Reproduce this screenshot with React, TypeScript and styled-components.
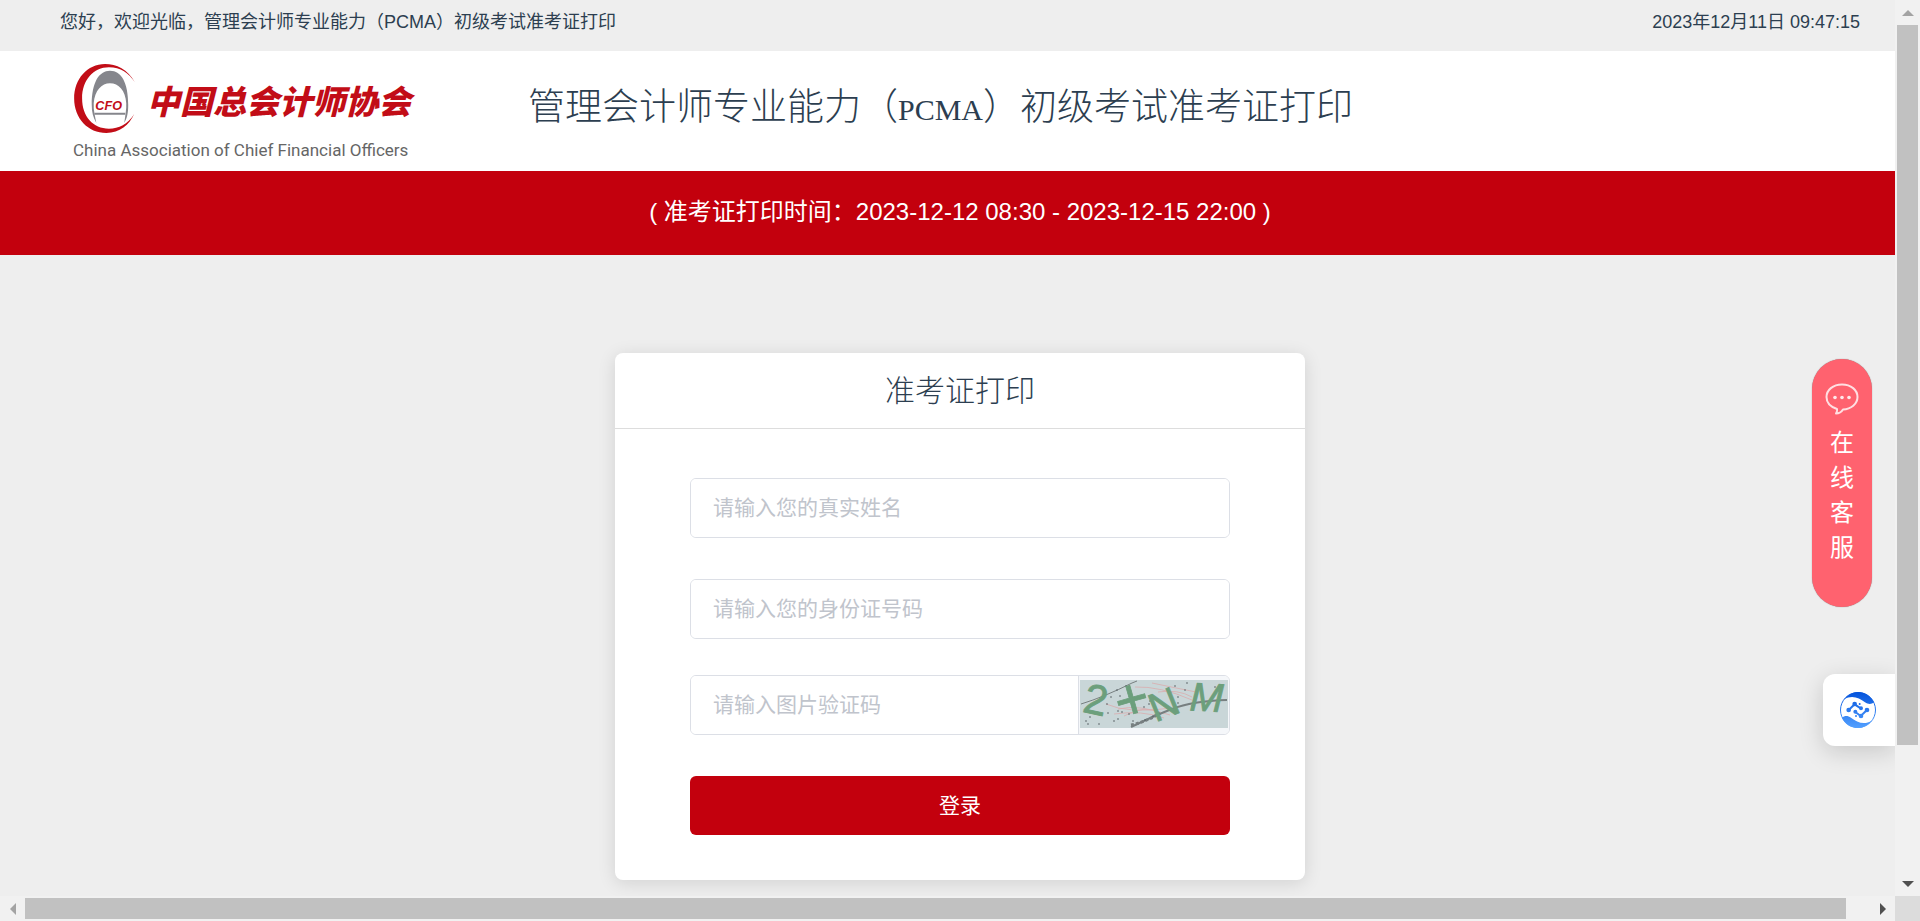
import React from "react";
import styled, { createGlobalStyle } from "styled-components";

const red = "#c3000d";
const ink = "#2c3e50";
const line = "#dcdfe6";
const BAR = "25px";

const GlobalStyle = createGlobalStyle`
  *, *::before, *::after { box-sizing: border-box; }
  body {
    margin: 0;
    background: #eee;
    color: ${ink};
    font-family: "Liberation Sans", "Noto Sans CJK SC", sans-serif;
    font-size: 18px;
  }
  h1, h2, p { margin: 0; font-weight: 300; }
  button, input { font: inherit; }
`;

const Shell = styled.div`
  display: grid;
  grid-template: minmax(0, 1fr) ${BAR} / minmax(0, 1fr) ${BAR};
  height: 100vh;
  overflow: hidden;
`;

const Viewport = styled.div`
  position: relative;
  overflow: hidden;
`;

const Page = styled.div`
  width: 100vw;
`;

const TopBar = styled.div`
  display: flex;
  justify-content: space-between;
  padding: 9px 60px 15px;
  line-height: 27px;
`;

const Header = styled.header`
  display: flex;
  align-items: flex-start;
  gap: 117px;
  height: 120px;
  padding: 13px 73px 0;
  background: #fff;
`;

const Brand = styled.a`
  display: grid;
  grid-template-columns: 62px 1fr;
  column-gap: 12px;
  align-items: center;
  color: #666;
  text-decoration: none;
  white-space: nowrap;
`;

const BrandName = styled.span`
  padding-top: 3px;
  color: #c20d17;
  font: italic 900 33px/66px "Noto Sans CJK SC", sans-serif;
`;

const BrandSub = styled.span`
  grid-column: 1 / -1;
  padding-top: 5px;
  font: 17px/24px Roboto, sans-serif;
`;

const Title = styled.h1`
  padding-top: 13px;
  font: 300 37px/54px "Noto Sans CJK SC", sans-serif;
  white-space: nowrap;
`;

const Latin = styled.span`
  font: 400 30px/54px "Liberation Serif", serif;
`;

const Notice = styled.p`
  padding: 23px 24px 25px;
  background: ${red};
  color: #fff;
  font-size: 24px;
  font-weight: 400;
  line-height: 36px;
  text-align: center;
`;

const Card = styled.main`
  width: 690px;
  max-width: 100%;
  margin: 98px auto 60px;
  border-radius: 8px;
  background: #fff;
  box-shadow: 0 3px 18px rgba(0, 0, 0, 0.12);
`;

const CardTitle = styled.h2`
  padding: 15px 0;
  border-bottom: 1px solid #ddd;
  font-size: 30px;
  line-height: 45px;
  text-align: center;
`;

const Form = styled.form`
  display: flex;
  flex-direction: column;
  gap: 41px;
  padding: 49px 75px 45px;
`;

const Field = styled.div`
  display: flex;
  height: 60px;
  overflow: hidden;
  border: 1px solid ${line};
  border-radius: 6px;
`;

const FieldGroup = styled.div`
  display: flex;
  flex-direction: column;
  gap: 36px;
`;

const Input = styled.input`
  flex: 1;
  min-width: 0;
  padding: 0 22px;
  border: 0;
  outline: 0;
  background: #fff;
  color: #606266;
  font-size: 21px;
  &::placeholder { color: #c0c4cc; opacity: 1; }
`;

const CaptchaButton = styled.button`
  display: flex;
  align-items: flex-start;
  padding: 4px 1px 0;
  border: 0;
  border-left: 1px solid ${line};
  background: #f5f7fa;
  cursor: pointer;
  svg { overflow: visible; }
`;

const Submit = styled.button`
  height: 59px;
  padding: 0 0 3px;
  border: 0;
  border-radius: 6px;
  background: ${red};
  color: #fff;
  font-size: 21px;
  cursor: pointer;
`;

const Service = styled.button`
  position: absolute;
  top: 359px;
  right: 23px;
  display: flex;
  flex-direction: column;
  align-items: center;
  gap: 10px;
  width: 60px;
  height: 248px;
  padding: 24px 18px;
  border: 0;
  border-radius: 30px;
  background: #ff626f;
  box-shadow: 0 0 1px #777;
  color: #fff;
  font-size: 24px;
  line-height: 35px;
  cursor: pointer;
`;

const Assistant = styled.button`
  position: absolute;
  top: 674px;
  right: 0;
  display: grid;
  place-items: center;
  width: 72px;
  height: 72px;
  padding: 0 2px 0 0;
  border: 0;
  border-radius: 12px 0 0 12px;
  background: #fff;
  box-shadow: 0 6px 24px rgba(0, 0, 0, 0.16);
  cursor: pointer;
`;

const Track = styled.div<{ $vertical?: boolean }>`
  display: flex;
  flex-direction: ${(p) => (p.$vertical ? "column" : "row")};
  padding: ${(p) => (p.$vertical ? "0 2px" : "2px 0")};
  background: #f1f1f1;
`;

const Thumb = styled.div<{ $share: number }>`
  flex: ${(p) => p.$share} 0 0;
  background: #c1c1c1;
`;

const Rest = styled.div<{ $share: number }>`
  flex: ${(p) => p.$share} 0 0;
`;

const Arrow = styled.div<{ $dim?: boolean }>`
  display: grid;
  place-items: center;
  flex: 0 0 ${BAR};
  color: ${(p) => (p.$dim ? "#a3a3a3" : "#505050")};
`;

const Corner = styled.div`
  background: #dcdcdc;
`;

const arrowPaths = {
  up: "M0 9 6 3 12 9Z",
  down: "M0 3 12 3 6 9Z",
  left: "M9 0 9 12 3 6Z",
  right: "M3 0 9 6 3 12Z",
};

function ScrollArrow({ to, dim }: { to: keyof typeof arrowPaths; dim?: boolean }) {
  return (
    <Arrow $dim={dim}>
      <svg width="12" height="12" viewBox="0 0 12 12" fill="currentColor" aria-hidden="true">
        <path d={arrowPaths[to]} />
      </svg>
    </Arrow>
  );
}

function Emblem() {
  return (
    <svg width="62" height="69" viewBox="42 27 186 208" aria-hidden="true">
      <path
        fill="#c20d17"
        d="M228 82C207 43 172 27 138 27 85 27 45 72 45 131c0 60 42 104 97 104 40 0 70-25 84-57-20 32-46 44-76 44-48 0-81-37-81-91 0-55 34-94 81-94 35 0 60 18 78 45Z"
      />
      <path
        fill="#85868c"
        d="M98 150C98 82 120 47 153 47c35 0 55 37 55 103 0 25-3 40-12 55 3-23 7-42 6-60-2-38-23-60-49-60-25 0-46 22-49 60-1 22 4 38 8 60-10-17-14-33-14-55Z"
      />
      <path stroke="#85868c" strokeWidth="6" d="M106 177H199" />
      <text x="109" y="165" fill="#c20d17" fontSize="38" fontWeight="700" fontStyle="italic" fontFamily="Liberation Sans">
        CFO
      </text>
    </svg>
  );
}

const specks = [
  [10, 37], [6, 41], [19, 44], [8, 44], [28, 33], [31, 17], [37, 10], [40, 16], [46, 6], [38, 31], [42, 32],
  [38, 39], [49, 34], [53, 41], [65, 40], [73, 36], [64, 27], [69, 24], [70, 21], [95, 6], [98, 17], [105, 10],
  [107, 3], [112, 26], [98, 23], [118, 5], [135, 7], [52, 25], [27, 24], [34, 41],
];

function Captcha() {
  return (
    <svg width="148" height="48" viewBox="0 0 148 48" aria-hidden="true">
      <rect width="148" height="48" fill="#c9d6d8" />
      <g fill="none" stroke="#dba9ab" strokeWidth="1" opacity=".75">
        <path d="M26 24Q48 34 92 28M38 29Q58 24 90 35M34 34Q62 30 84 38M55 7Q80 6 112 20M72 3Q96 8 116 12M78 12Q98 9 112 17M44 36Q66 24 80 33" />
      </g>
      <g fill="none" stroke="#777f80">
        <path d="M1 24Q24 17 52 3L57 1" />
        <path strokeWidth="2" d="M51 47Q76 35 92 29 112 21 147 20" />
        <path strokeWidth="3" strokeDasharray="3 2" d="M51 45Q66 42 80 33" />
      </g>
      <g fill="#535c61">
        {specks.map(([x, y]) => (
          <circle key={`${x}-${y}`} cx={x} cy={y} r="0.8" />
        ))}
      </g>
      <g fill="#6c9f7c" stroke="#6c9f7c" strokeWidth="0.8" fontFamily="Liberation Sans" textAnchor="middle">
        <text fontSize="42" transform="translate(13 34) rotate(12)">2</text>
        <text fontSize="58" transform="translate(57 38) rotate(-16)">+</text>
        <text fontSize="40" transform="translate(89 37) rotate(-22)">N</text>
        <text fontSize="40" transform="translate(126 31) rotate(3)" fontStyle="italic">M</text>
      </g>
    </svg>
  );
}

function ChatIcon() {
  return (
    <svg width="34" height="32" viewBox="0 0 34 32" fill="none" aria-hidden="true">
      <path
        stroke="#ffdfe2"
        strokeWidth="2"
        strokeLinejoin="round"
        d="M12 26C6 24 1.500 20 1.500 14 1.500 7 8 1.500 17 1.500S32.500 7 32.500 14 26 26 18 26.500c-1.500 2.500-4 4-7 4 1-1.500 1.500-3 1-4.500Z"
      />
      <g fill="#ffe9ea">
        <circle cx="10" cy="14.500" r="1.800" />
        <circle cx="17" cy="14.500" r="1.800" />
        <circle cx="24" cy="14.500" r="1.800" />
      </g>
    </svg>
  );
}

function AssistantIcon() {
  return (
    <svg width="36" height="36" viewBox="0 0 108 108" fill="none" aria-hidden="true">
      <defs>
        <linearGradient id="assistant-blue" x1="0" y1="0" x2="0" y2="108" gradientUnits="userSpaceOnUse">
          <stop stopColor="#0453dc" />
          <stop offset="1" stopColor="#53a0ff" />
        </linearGradient>
      </defs>
      <circle cx="54" cy="54" r="52.500" stroke="url(#assistant-blue)" strokeWidth="3" />
      <path
        fill="url(#assistant-blue)"
        d="M12 22C25 7 39 0 54 0c22 0 40 13 48 31-8 7-18 6-27 0C57 17 36 8 12 22ZM6 77c8-7 18-6 27 0 18 14 39 23 63 9-13 15-27 22-42 22C32 108 14 95 6 77Z"
      />
      <g fill="url(#assistant-blue)" stroke="url(#assistant-blue)" strokeWidth="6" strokeLinecap="round" strokeLinejoin="round">
        <path d="M26 54 44 37 62 49M46 60 62 72 81 54" fill="none" />
        <circle cx="26" cy="54" r="4" />
        <circle cx="44" cy="36" r="4" />
        <circle cx="63" cy="49" r="3" />
        <circle cx="46" cy="59" r="3" />
        <circle cx="63" cy="72" r="4" />
        <circle cx="81" cy="54" r="4" />
      </g>
      <circle cx="59" cy="36" r="3" fill="#1767e6" />
      <circle cx="48" cy="72" r="3" fill="#2f82f4" />
    </svg>
  );
}

export default function App() {
  return (
    <>
      <GlobalStyle />
      <Shell>
        <Viewport>
          <Page>
            <TopBar>
              <span>您好，欢迎光临，管理会计师专业能力（PCMA）初级考试准考证打印</span>
              <time dateTime="2023-12-11T09:47:15">2023年12月11日 09:47:15</time>
            </TopBar>
            <Header>
              <Brand href="#">
                <Emblem />
                <BrandName>中国总会计师协会</BrandName>
                <BrandSub>China Association of Chief Financial Officers</BrandSub>
              </Brand>
              <Title>
                管理会计师专业能力（<Latin>PCMA</Latin>）初级考试准考证打印
              </Title>
            </Header>
            <Notice>( 准考证打印时间：2023-12-12 08:30 - 2023-12-15 22:00 )</Notice>
            <Card>
              <CardTitle>准考证打印</CardTitle>
              <Form onSubmit={(e) => e.preventDefault()}>
                <Field>
                  <Input aria-label="真实姓名" placeholder="请输入您的真实姓名" />
                </Field>
                <FieldGroup>
                  <Field>
                    <Input aria-label="身份证号码" placeholder="请输入您的身份证号码" />
                  </Field>
                  <Field>
                    <Input aria-label="图片验证码" placeholder="请输入图片验证码" />
                    <CaptchaButton type="button" aria-label="刷新验证码">
                      <Captcha />
                    </CaptchaButton>
                  </Field>
                </FieldGroup>
                <Submit type="submit">登录</Submit>
              </Form>
            </Card>
          </Page>
          <Service type="button">
            <ChatIcon />
            <span>在线客服</span>
          </Service>
          <Assistant type="button" aria-label="智能助手">
            <AssistantIcon />
          </Assistant>
        </Viewport>
        <Track $vertical aria-hidden="true">
          <ScrollArrow to="up" dim />
          <Thumb $share={720} />
          <Rest $share={126} />
          <ScrollArrow to="down" />
        </Track>
        <Track aria-hidden="true">
          <ScrollArrow to="left" dim />
          <Thumb $share={1821} />
          <Rest $share={24} />
          <ScrollArrow to="right" />
        </Track>
        <Corner />
      </Shell>
    </>
  );
}
